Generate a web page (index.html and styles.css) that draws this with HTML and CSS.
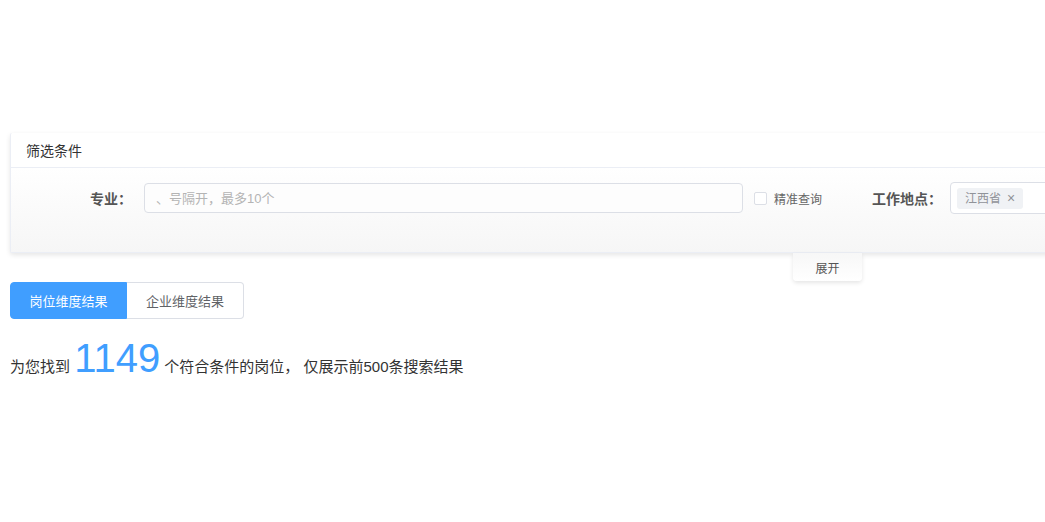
FILE: index.html
```html
<!DOCTYPE html>
<html>
  <head>
    <title>职位搜索</title>
    <link rel="stylesheet" href="styles.css">
  </head>
  <body>
    <section class="page">
      <div class="filter-panel">
        <div class="filter-header">筛选条件</div>
        <div class="filter-body">
          <label class="filter-label" for="major">专业：</label>
          <input class="major-input" id="major" type="text" placeholder="、号隔开，最多10个" />
          <label class="exact-check">
            <span class="check-box"></span>
            <span>精准查询</span>
          </label>
          <span class="filter-label place-label">工作地点：</span>
          <div class="place-select">
            <span class="place-tag">江西省<span class="tag-close">×</span></span>
          </div>
        </div>
      </div>
      <div class="toggle-row">
        <button class="toggle-button" type="button">展开</button>
      </div>

      <div class="result-tabs">
        <button class="tab tab-active" type="button">岗位维度结果</button>
        <button class="tab" type="button">企业维度结果</button>
      </div>

      <p class="result-count">
        为您找到 <span class="count-number">1149</span> 个符合条件的岗位， 仅展示前500条搜索结果
      </p>
    </section>
  </body>
</html>
```

FILE: styles.css
```css
html,
body {
  margin: 0;
  background-color: #fff;
  overflow: hidden;
}
body {
  font-family: "Liberation Sans", "Noto Sans CJK SC", sans-serif;
  color: #333;
}

.page {
  padding: 133px 0 0 10px;
}

.filter-panel {
  width: 1100px;
  border: 1px solid #ebeef5;
  border-top: none;
  border-radius: 2px;
  box-shadow: 0 2px 5px rgba(0, 0, 0, 0.1);
  background-color: #fff;
}
.filter-header {
  height: 34px;
  line-height: 36px;
  padding-left: 15px;
  font-size: 14px;
  color: #333;
  border-bottom: 1px solid #ebeef5;
}
.filter-body {
  display: flex;
  align-items: center;
  padding: 14px 0 38px 0;
  white-space: nowrap;
  background: linear-gradient(#fff, #f6f6f6);
}
.filter-body > * {
  flex-shrink: 0;
}
.filter-label {
  font-size: 14px;
  font-weight: bold;
  color: #555;
}
.filter-body > .filter-label:first-child {
  width: 121px;
  text-align: right;
}
.major-input {
  margin-left: 12px;
  width: 599px;
  height: 30px;
  box-sizing: border-box;
  padding: 0 11px;
  border: 1px solid #dcdfe6;
  border-radius: 4px;
  font-family: inherit;
  font-size: 13px;
  background-color: #fdfdfd;
}
.major-input::placeholder {
  color: #b4b4b4;
}
.exact-check {
  display: flex;
  align-items: center;
  margin-left: 11px;
  font-size: 12px;
  color: #666;
}
.check-box {
  width: 11px;
  height: 11px;
  border: 1px solid #dcdfe6;
  border-radius: 2px;
  background-color: #fff;
  margin-right: 7px;
}
.place-label {
  margin-left: 50px;
}
.place-select {
  margin-left: 8px;
  width: 200px;
  height: 32px;
  box-sizing: border-box;
  padding: 0 6px;
  display: flex;
  align-items: center;
  border: 1px solid #dcdfe6;
  border-radius: 4px;
  background-color: #fff;
}
.place-tag {
  height: 21px;
  line-height: 21px;
  padding: 0 8px;
  background-color: #f0f2f5;
  border-radius: 3px;
  font-size: 12px;
  color: #909399;
}
.tag-close {
  margin-left: 6px;
  font-size: 14px;
}

.toggle-row {
  padding-left: 783px;
}
.toggle-button {
  width: 69px;
  height: 28px;
  border: none;
  border-radius: 0 0 4px 4px;
  background: linear-gradient(#f7f7f7, #fff);
  box-shadow: 0 2px 4px rgba(0, 0, 0, 0.1);
  font-family: inherit;
  font-size: 12px;
  color: #555;
}

.result-tabs {
  display: flex;
  margin-top: 1px;
}
.tab {
  width: 117px;
  height: 37px;
  border: 1px solid #dcdfe6;
  background-color: #fff;
  font-family: inherit;
  font-size: 13px;
  color: #606266;
}
.tab + .tab {
  border-left: none;
  border-radius: 0 4px 4px 0;
}
.tab-active {
  background-color: #409eff;
  border-color: #409eff;
  color: #fff;
  border-radius: 4px 0 0 4px;
}

.result-count {
  margin: 17px 0 0 0;
  font-size: 15px;
  color: #333;
}
.count-number {
  font-size: 40px;
  color: #409eff;
}
```
